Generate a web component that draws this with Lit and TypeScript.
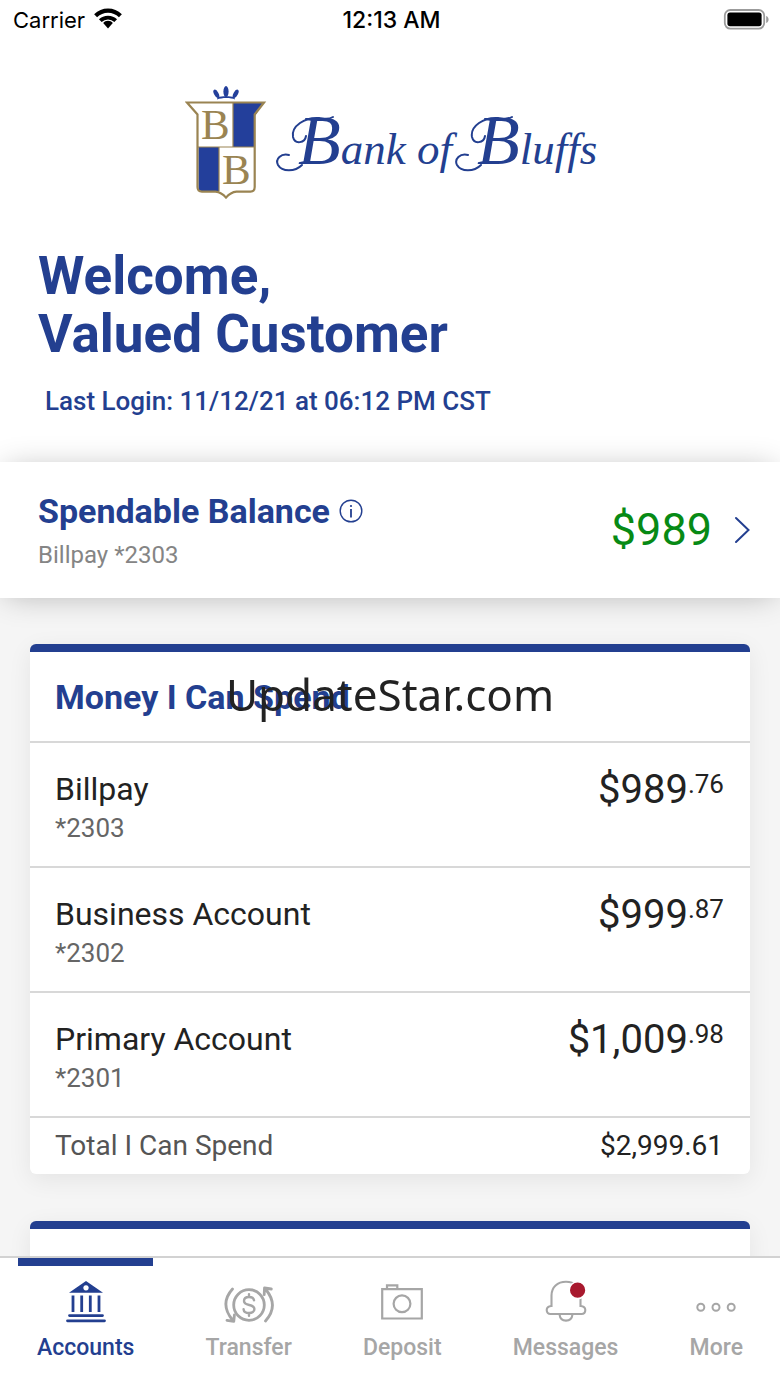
import { LitElement, html, css, svg } from "lit";
import { customElement, property } from "lit/decorators.js";
import { classMap } from "lit/directives/class-map.js";

interface Account {
  name: string;
  number: string;
  dollars: string;
  cents: string;
}

const accounts: Account[] = [
  { name: "Billpay", number: "*2303", dollars: "$989", cents: ".76" },
  { name: "Business Account", number: "*2302", dollars: "$999", cents: ".87" },
  { name: "Primary Account", number: "*2301", dollars: "$1,009", cents: ".98" },
];

const icons = {
  accounts: svg`
    <path d="M25 3 L42 14.8 H8 Z M25 7.2 a2.7 2.7 0 1 0 0.01 0 Z" fill="currentColor" fill-rule="evenodd" stroke="none" />
    <path d="M12 17.5 V34 M20.7 17.5 V34 M29.3 17.5 V34 M38 17.5 V34" stroke-width="2.8" />
    <path d="M8.5 37.6 H41.5 M6.5 42.8 H43.5" stroke-width="2.8" stroke-linecap="round" />`,
  transfer: svg`
    <circle cx="25" cy="27" r="15.3" />
    <path d="M30 22.3 C29.6 20 27.6 19 25 19 C22 19 20 20.5 20 23 C20 28.6 30.4 25.4 30.4 31 C30.4 33.6 28 35 25.2 35 C22.2 35 19.8 33.8 19.6 31.3 M25 16.3 V19 M25 35 V37.7" stroke-linecap="round" stroke-width="2.4" />
    <path d="M8.5 11 C-0.5 21 -0.5 31 8.5 42 M3 42.3 L9.8 43.4 L10.4 37 M41.5 43 C50.5 33 50.5 22 41.8 11.5 M47.3 11 L40.5 10 L40.2 16.6" stroke-linecap="round" stroke-linejoin="round" />`,
  deposit: svg`
    <path d="M5.2 11.2 H44.8 V40.5 H5.2 Z M10 11 V7.3 H20.3 V11" stroke-width="2.2" />
    <circle cx="25" cy="25.8" r="8.4" stroke-width="2.2" />`,
  messages: svg`
    <path d="M10.5 28 V17.5 C10.5 9 16.5 3.8 25 3.8 C33.5 3.8 39.5 9 39.5 17.5 V28 C43 28.4 44.3 30 44.3 32 C44.3 34.5 42.7 36 40.5 36 H9.5 C7.3 36 5.7 34.5 5.7 32 C5.7 30 7 28.4 10.5 28 Z M18.5 36.3 C19 40.5 21.5 42.6 25 42.6 C28.5 42.6 31 40.5 31.5 36.3" stroke-width="2.1" />
    <circle class="dot" cx="36.6" cy="12.2" r="8.4" stroke="#fff" stroke-width="1.6" />`,
  more: svg`
    <circle cx="9.8" cy="29.3" r="3.5" stroke-width="2" />
    <circle cx="25" cy="29.3" r="3.5" stroke-width="2" />
    <circle cx="40.2" cy="29.3" r="3.5" stroke-width="2" />`,
};

@customElement("status-bar")
export class StatusBar extends LitElement {
  static styles = css`
    :host {
      display: grid;
      grid-template-columns: 1fr auto 1fr;
      align-items: center;
      height: 40px;
      padding: 0 10px 0 13px;
      font: 400 22px/26px Inter, "Liberation Sans", sans-serif;
      color: #000;
    }
    .carrier {
      display: flex;
      align-items: center;
      gap: 8px;
    }
    .time {
      font-size: 23px;
      font-weight: 500;
    }
    .battery {
      justify-self: end;
    }
    svg {
      display: block;
    }
  `;

  render() {
    return html`
      <div class="carrier">
        <span>Carrier</span>
        <svg width="30" height="24" viewBox="0 0 30 24" fill="none" stroke="#000" stroke-width="4.2" aria-hidden="true">
          <path d="M2.6 7.8 C9.6 1 20.4 1 27.4 7.8" />
          <path d="M7.3 12.7 C11.4 8.6 18.6 8.6 22.7 12.7" stroke-width="3.8" />
          <path d="M15 12.8 C17 12.8 18.6 13.6 19.8 14.9 L15 20.6 L10.2 14.9 C11.4 13.6 13 12.8 15 12.8 Z" fill="#000" stroke="none" />
        </svg>
      </div>
      <span class="time">12:13 AM</span>
      <svg class="battery" width="47" height="22" viewBox="0 0 47 22" aria-hidden="true">
        <rect x="1.8" y="1" width="39.4" height="18.6" rx="5.5" fill="none" stroke="#9b9b9b" stroke-width="1.8" />
        <rect x="4.4" y="3.6" width="34.2" height="13.6" rx="2.6" fill="#000" />
        <path d="M43.2 6.9 C46.4 8.1 46.4 12.7 43.2 13.9 Z" fill="#9b9b9b" />
      </svg>
    `;
  }
}

@customElement("bank-logo")
export class BankLogo extends LitElement {
  static styles = css`
    :host {
      display: flex;
      justify-content: center;
      align-items: center;
      gap: 8px;
    }
    svg {
      display: block;
    }
    .initial {
      font: 400 43px "Liberation Serif", serif;
      fill: #9a8452;
    }
    .wordmark {
      font: italic 400 45px "Liberation Serif", serif;
      fill: #233f90;
    }
    .capital {
      font-size: 70px;
    }
    .swash {
      fill: none;
      stroke: #233f90;
      stroke-width: 2;
      stroke-linecap: round;
    }
    .name {
      overflow: visible;
    }
  `;

  render() {
    return html`
      <svg width="82" height="116" viewBox="0 0 82 116" aria-hidden="true">
        <g fill="#233f9b">
          <path d="M32 14.6 C37 12.6 46 12.6 50 14.6 L49.4 12.2 C45 11 37 11 32.6 12.2 Z" />
          <ellipse cx="31.3" cy="8.8" rx="2.2" ry="4.6" transform="rotate(-28 31.3 8.8)" />
          <ellipse cx="41" cy="6.6" rx="2.6" ry="5.6" />
          <ellipse cx="50.7" cy="8.8" rx="2.2" ry="4.6" transform="rotate(28 50.7 8.8)" />
          <path d="M48 18 H78 L69 32.5 V62 H48 Z" />
          <path d="M13.5 62 H34 V106 H16.5 C14.5 106 13.5 105 13.5 103 Z" />
        </g>
        <g fill="none" stroke="#9a8452" stroke-width="2.2">
          <path d="M2 17.5 H79 L69.7 29.5 V102 C69.7 105.4 68.4 106.6 65.5 106.6 H51.5 C47 107 44 109 41 112.6 C38 109 35 107 30.5 106.6 H17 C14 106.6 12.5 105 12.5 102 V29.5 Z" />
          <path d="M48 18 V62 M34 62 V106 M13 62 H69" stroke-width="1.2" />
        </g>
        <text class="initial" x="16" y="54">B</text>
        <text class="initial" x="37" y="99">B</text>
      </svg>
      <svg class="name" width="321" height="90" viewBox="0 0 321 90">
        <g class="swash">
          <path d="M31 38 C30 45 20 47 18 39 C16 28 30 19 44 20 C50 20.5 53 22 58 19 M14 57 C6 55 0 61 3 67 C7 74 20 74 27 67" />
          <path d="M210 38 C209 45 199 47 197 39 C195 28 209 19 223 20 C229 20.5 232 22 237 19 M193 57 C185 55 179 61 182 67 C186 74 199 74 206 67" />
        </g>
        <text class="wordmark" y="66">
          <tspan class="capital" x="23">B</tspan><tspan>ank of</tspan><tspan class="capital" x="202">B</tspan><tspan>luffs</tspan>
        </text>
      </svg>
    `;
  }
}

@customElement("account-card")
export class AccountCard extends LitElement {
  @property() heading = "";
  @property({ attribute: false }) rows: Account[] = [];
  @property({ attribute: "total-label" }) totalLabel = "";
  @property() total = "";

  static styles = css`
    :host {
      display: block;
      border-top: 8px solid #233f90;
      border-radius: 6px;
      background: #fff;
      box-shadow: 0 6px 24px rgba(0, 0, 0, 0.07);
      color: #222;
    }
    h2 {
      box-sizing: border-box;
      height: 89px;
      margin: 0;
      padding: 0 25px;
      font-size: 34px;
      line-height: 90px;
      font-weight: 700;
      color: #233f90;
    }
    ul {
      list-style: none;
      margin: 0;
      padding: 0;
    }
    .row {
      display: flex;
      justify-content: space-between;
      height: 123px;
      border-top: 2px solid #d8d8d8;
    }
    .row a {
      flex: 1;
      display: flex;
      justify-content: space-between;
      padding: 24px 26px 0 25px;
      color: inherit;
      text-decoration: none;
    }
    .name {
      font-size: 32px;
      line-height: 44px;
    }
    .number {
      font-size: 26px;
      line-height: 34px;
      color: #666;
    }
    .amount {
      display: flex;
      align-items: flex-start;
      font-size: 40px;
      line-height: 46px;
    }
    .cents {
      font-size: 26px;
      line-height: 34px;
    }
    .total {
      display: flex;
      justify-content: space-between;
      padding: 0 27px 0 25px;
      border-top: 2px solid #d8d8d8;
      font-size: 28px;
      line-height: 56px;
    }
    .total-label {
      color: #555;
    }
  `;

  render() {
    return html`
      <h2>${this.heading}</h2>
      <ul>
        ${this.rows.map(
          (row) => html`
            <li class="row">
              <a href="#">
                <div>
                  <div class="name">${row.name}</div>
                  <div class="number">${row.number}</div>
                </div>
                <div class="amount"><span>${row.dollars}</span><span class="cents">${row.cents}</span></div>
              </a>
            </li>
          `,
        )}
      </ul>
      ${this.total
        ? html`<div class="total"><span class="total-label">${this.totalLabel}</span><span>${this.total}</span></div>`
        : null}
    `;
  }
}

@customElement("tab-bar")
export class TabBar extends LitElement {
  @property() selected = "Accounts";

  static styles = css`
    :host {
      display: block;
      border-top: 2px solid #d2d2d2;
      background: #fff;
    }
    nav {
      display: flex;
      justify-content: space-between;
      padding: 0 18px;
    }
    button {
      display: flex;
      flex-direction: column;
      align-items: center;
      margin: 0;
      padding: 12px 19px 23px;
      border: 0;
      border-top: 8px solid transparent;
      background: none;
      color: #a6a6a6;
      font: 500 23px/32px Roboto, sans-serif;
      cursor: pointer;
    }
    .active {
      border-top-color: #233f90;
      color: #233f90;
    }
    svg {
      display: block;
      margin-bottom: 4px;
    }
    .dot {
      fill: #a8192e;
    }
  `;

  render() {
    const tabs = [
      { label: "Accounts", icon: icons.accounts },
      { label: "Transfer", icon: icons.transfer },
      { label: "Deposit", icon: icons.deposit },
      { label: "Messages", icon: icons.messages },
      { label: "More", icon: icons.more },
    ];
    return html`
      <nav>
        ${tabs.map(
          (tab) => html`
            <button
              type="button"
              class=${classMap({ active: tab.label === this.selected })}
              @click=${() => (this.selected = tab.label)}
            >
              <svg width="50" height="50" viewBox="0 0 50 50" fill="none" stroke="currentColor" stroke-width="2.8" aria-hidden="true">${tab.icon}</svg>
              ${tab.label}
            </button>
          `,
        )}
      </nav>
    `;
  }
}

@customElement("app-root")
export class AppRoot extends LitElement {
  static styles = css`
    :host {
      position: relative;
      display: flex;
      flex-direction: column;
      height: 100vh;
      overflow: hidden;
      background: #fff;
      font-family: Roboto, sans-serif;
      color: #222;
    }
    main {
      flex: 1;
      min-height: 0;
      overflow: hidden auto;
      scrollbar-width: none;
      background: #f5f5f5;
    }
    header {
      padding: 45px 38px 44px;
      background: #fff;
      color: #233f90;
    }
    h1 {
      margin: 46px 0 21px;
      font-size: 53px;
      line-height: 58px;
      font-weight: 700;
    }
    .login {
      margin: 0;
      padding-left: 7px;
      font-size: 26px;
      line-height: 34px;
      font-weight: 500;
    }
    .balance {
      position: relative;
      display: flex;
      justify-content: space-between;
      align-items: center;
      padding: 0 28px 0 38px;
      background: #fff;
      box-shadow: 0 2px 30px -6px rgba(0, 0, 0, 0.3);
    }
    .summary {
      padding: 28px 0 20px;
    }
    .title {
      display: flex;
      align-items: center;
      gap: 9px;
      color: #233f90;
    }
    h2 {
      margin: 0;
      font-size: 34px;
      line-height: 42px;
      font-weight: 700;
    }
    .info {
      margin: 0;
      padding: 0;
      border: 0;
      background: none;
      color: inherit;
    }
    svg {
      display: block;
    }
    .source {
      font-size: 24px;
      line-height: 46px;
      color: #858585;
    }
    .spendable {
      display: flex;
      align-items: center;
      gap: 22px;
      color: #233f90;
      text-decoration: none;
    }
    .spendable-amount {
      font-size: 45px;
      line-height: 52px;
      color: #078a15;
    }
    .cards {
      display: flex;
      flex-direction: column;
      gap: 47px;
      padding: 46px 30px;
    }
    .watermark {
      position: absolute;
      top: 50%;
      left: 50%;
      transform: translate(-50%, -50%);
      font: 400 44px/60px "Noto Sans", "Open Sans", sans-serif;
      color: #222;
      pointer-events: none;
    }
  `;

  render() {
    return html`
      <status-bar></status-bar>
      <main>
        <header>
          <bank-logo></bank-logo>
          <h1>Welcome,<br />Valued Customer</h1>
          <p class="login">Last Login: 11/12/21 at 06:12 PM CST</p>
        </header>
        <section class="balance">
          <div class="summary">
            <div class="title">
              <h2>Spendable Balance</h2>
              <button class="info" type="button" aria-label="About spendable balance">
                <svg width="24" height="24" viewBox="0 0 24 24" fill="none" stroke="currentColor" stroke-width="1.4">
                  <circle cx="12" cy="12" r="10.8" />
                  <path d="M12 10 V18.4" stroke-width="1.8" />
                  <circle cx="12" cy="7" r="1.1" fill="currentColor" stroke="none" />
                </svg>
              </button>
            </div>
            <div class="source">Billpay *2303</div>
          </div>
          <a class="spendable" href="#">
            <span class="spendable-amount">$989</span>
            <svg width="18" height="28" viewBox="0 0 18 28" fill="none" stroke="currentColor" stroke-width="2" stroke-linecap="round" aria-hidden="true">
              <path d="M2 2 L14.5 14 L2 26" />
            </svg>
          </a>
        </section>
        <div class="cards">
          <account-card
            heading="Money I Can Spend"
            .rows=${accounts}
            total-label="Total I Can Spend"
            total="$2,999.61"
          ></account-card>
          <account-card></account-card>
        </div>
      </main>
      <tab-bar></tab-bar>
      <div class="watermark">UpdateStar.com</div>
    `;
  }
}
